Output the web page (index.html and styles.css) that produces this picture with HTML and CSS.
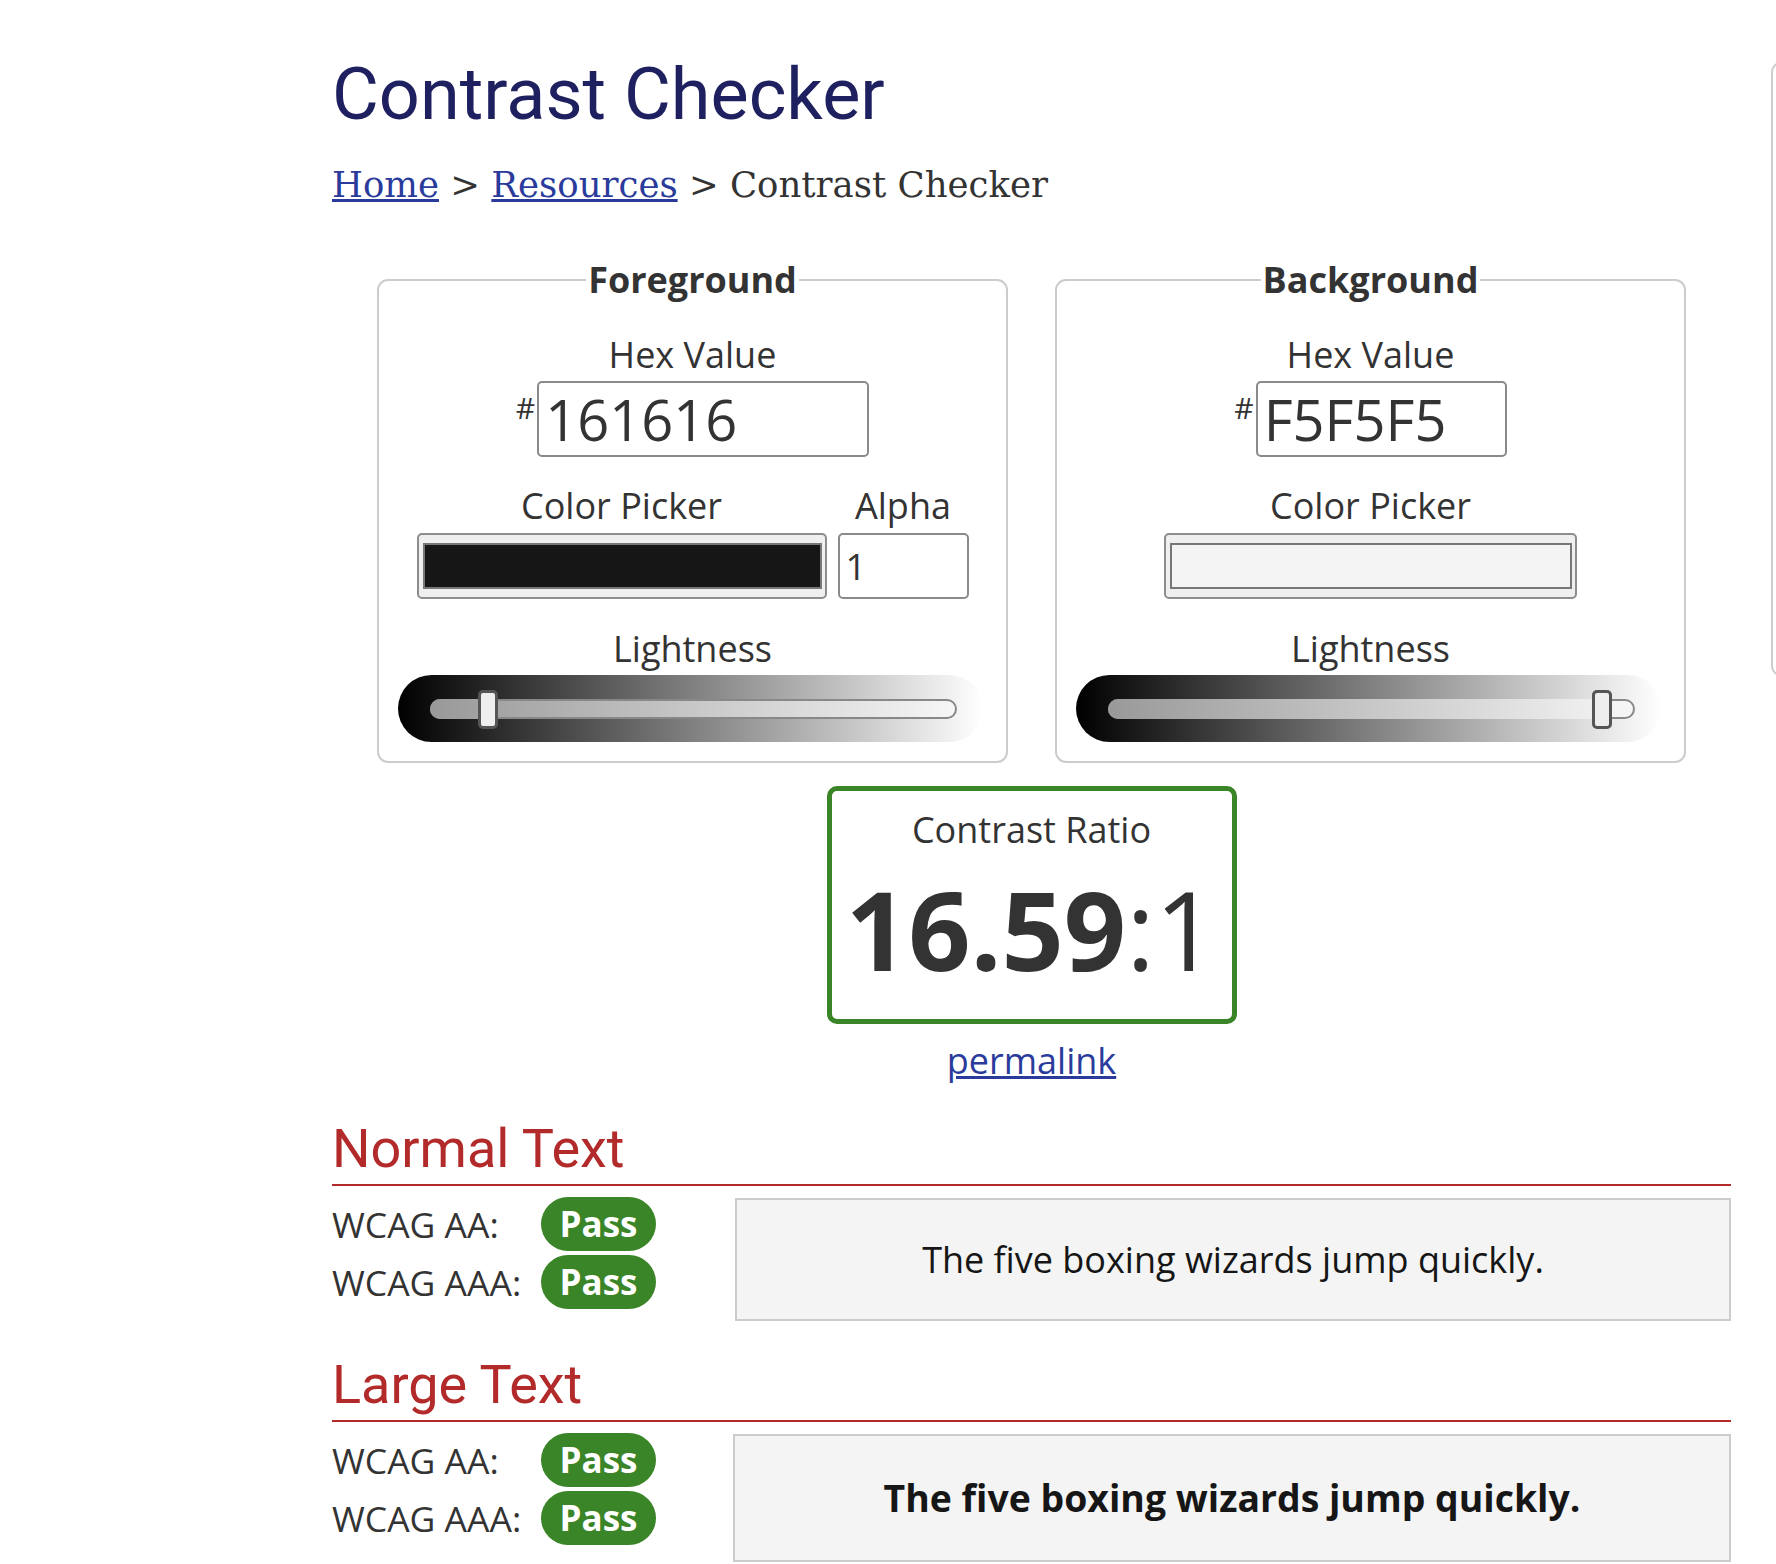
FILE: index.html
```html
<!DOCTYPE html>
<html lang="en">
<head>
<meta charset="utf-8">
<title>Contrast Checker</title>
<link rel="stylesheet" href="styles.css">
</head>
<body>
<div class="page">
  <main class="main">
    <h1 class="title">Contrast Checker</h1>
    <nav class="crumbs"><a href="#">Home</a> &gt; <a href="#">Resources</a> &gt; Contrast Checker</nav>

    <div class="pickers">
      <fieldset class="panel">
        <legend>Foreground</legend>
        <div class="panel-body">
          <div class="lbl lbl-hex">Hex Value</div>
          <div class="hexrow"><span class="hash">#</span><input class="hex hex-fg" type="text" value="161616"></div>
          <div class="pickgrid pickgrid-fg">
            <div class="lbl">Color Picker</div>
            <div class="lbl">Alpha</div>
            <div class="picker"><div class="swatch swatch-dark"></div></div>
            <input class="alpha" type="text" value="1">
          </div>
          <div class="lbl lbl-light">Lightness</div>
          <div class="slider">
            <div class="track">
              <div class="fill" style="width:58px"></div>
              <div class="thumb" style="left:46px"></div>
            </div>
          </div>
        </div>
      </fieldset>

      <fieldset class="panel">
        <legend>Background</legend>
        <div class="panel-body">
          <div class="lbl lbl-hex">Hex Value</div>
          <div class="hexrow"><span class="hash">#</span><input class="hex hex-bg" type="text" value="F5F5F5"></div>
          <div class="pickgrid pickgrid-bg">
            <div class="lbl">Color Picker</div>
            <div class="picker"><div class="swatch swatch-light"></div></div>
          </div>
          <div class="lbl lbl-light">Lightness</div>
          <div class="slider">
            <div class="track">
              <div class="fill" style="width:492px"></div>
              <div class="thumb" style="left:482px"></div>
            </div>
          </div>
        </div>
      </fieldset>
    </div>

    <div class="ratio-box">
      <div class="ratio-label">Contrast Ratio</div>
      <div class="ratio-value">16.59<span class="ratio-rest">:1</span></div>
    </div>
    <div class="permalink"><a href="#">permalink</a></div>

    <h2 class="sec-title">Normal Text</h2>
    <div class="results">
      <div class="checks">
        <div class="check"><span class="check-label">WCAG AA:</span><span class="badge">Pass</span></div>
        <div class="check"><span class="check-label">WCAG AAA:</span><span class="badge">Pass</span></div>
      </div>
      <div class="sample">The five boxing wizards jump quickly.</div>
    </div>

    <h2 class="sec-title">Large Text</h2>
    <div class="results results-large">
      <div class="checks">
        <div class="check"><span class="check-label">WCAG AA:</span><span class="badge">Pass</span></div>
        <div class="check"><span class="check-label">WCAG AAA:</span><span class="badge">Pass</span></div>
      </div>
      <div class="sample sample-large">The five boxing wizards jump quickly.</div>
    </div>
  </main>
  <aside class="aside"></aside>
</div>
</body>
</html>
```

FILE: styles.css
```css
html, body {
  margin: 0;
  padding: 0;
  overflow: hidden;
  background: #fff;
}

body {
  font-family: "Open Sans", sans-serif;
  color: #333;
  width: 1776px;
  height: 1564px;
}

.page {
  display: flex;
  align-items: flex-start;
  gap: 40px;
  padding-left: 332px;
}

.main {
  width: 1399px;
  flex-shrink: 0;
  padding-top: 51px;
}

.title {
  margin: 0;
  font-family: Roboto, sans-serif;
  font-weight: 400;
  font-size: 72px;
  line-height: 88px;
  color: #1e2060;
}

.crumbs {
  margin-top: 26px;
  font-family: "DejaVu Serif", serif;
  font-size: 35.5px;
  line-height: 40px;
  color: #333;
}

.crumbs a {
  color: #2a3b9c;
  text-decoration: underline;
}

.pickers {
  display: flex;
  justify-content: center;
  gap: 47px;
  margin-top: 51px;
}

.panel {
  width: 631px;
  min-width: 0;
  box-sizing: border-box;
  margin: 0;
  border: 2px solid #ccc;
  border-radius: 11px;
  padding: 0 19px 19px;
}

.panel legend {
  margin: 0 auto;
  padding: 0 2px;
  font-weight: 700;
  font-size: 36px;
  line-height: 48px;
  color: #333;
}

.panel-body {
  display: flex;
  flex-direction: column;
  align-items: center;
}

.lbl {
  font-size: 36px;
  line-height: 48px;
  text-align: center;
}

.lbl-hex {
  margin-top: 27px;
}

.hexrow {
  display: flex;
  align-items: flex-start;
  margin-top: 2px;
}

.hash {
  font-size: 30px;
  line-height: 41px;
  margin-top: 6px;
  margin-right: 2px;
}

.hex {
  height: 76px;
  box-sizing: border-box;
  border: 2px solid #8a8a8a;
  border-radius: 5px;
  padding: 0 0 0 6px;
  margin: 0;
  font-family: "Open Sans", sans-serif;
  font-size: 56px;
  color: #333;
  background: #fff;
  outline: none;
}

.hex-fg { width: 332px; }
.hex-bg { width: 251px; }

.pickgrid {
  display: grid;
  column-gap: 11px;
  row-gap: 3px;
  margin-top: 25px;
}

.pickgrid-fg { grid-template-columns: 410px 131px; }
.pickgrid-bg { grid-template-columns: 413px; }

.picker {
  height: 66px;
  box-sizing: border-box;
  border: 2px solid #8d8d8d;
  border-radius: 5px;
  background: #efefef;
  padding: 8px 3px 8px 4px;
}

.swatch {
  height: 100%;
  box-sizing: border-box;
  border: 2px solid #777;
}

.swatch-dark { background: #161616; }
.swatch-light { background: #f4f4f4; }

.alpha {
  width: 131px;
  height: 66px;
  box-sizing: border-box;
  border: 2px solid #8a8a8a;
  border-radius: 5px;
  padding: 0 0 0 6px;
  margin: 0;
  font-family: "Open Sans", sans-serif;
  font-size: 36px;
  color: #333;
  background: #fff;
  outline: none;
}

.lbl-light {
  margin-top: 26px;
}

.slider {
  align-self: flex-start;
  width: 585px;
  height: 67px;
  box-sizing: border-box;
  margin-top: 2px;
  padding: 24px 26px 0 32px;
  border-radius: 34px;
  background: linear-gradient(to right, #000 0%, #fff 100%);
}

.track {
  position: relative;
  height: 20px;
  box-sizing: border-box;
  border: 2px solid #888;
  border-radius: 10px;
  background: linear-gradient(to right, #999, #f6f6f6);
}

.fill {
  position: absolute;
  left: -2px;
  top: -2px;
  bottom: -2px;
  border-radius: 10px 0 0 10px;
  background: linear-gradient(to right, #999, #f6f6f6);
  background-size: 527px 100%;
}

.thumb {
  position: absolute;
  top: 50%;
  width: 20px;
  height: 39px;
  margin-top: -19.5px;
  box-sizing: border-box;
  border: 3px solid #555;
  border-radius: 5px;
  background: #eee;
}

.ratio-box {
  width: 410px;
  box-sizing: border-box;
  margin: 23px auto 0;
  border: 5px solid #3a8527;
  border-radius: 10px;
  padding: 15px 0 30px;
  text-align: center;
}

.ratio-label {
  font-size: 36px;
  line-height: 48px;
}

.ratio-value {
  margin-top: 15px;
  font-size: 109px;
  line-height: 120px;
  font-weight: 700;
  color: #333;
}

.ratio-rest {
  font-weight: 400;
}

.permalink {
  margin-top: 13px;
  text-align: center;
  font-size: 36px;
  line-height: 48px;
}

.permalink a {
  color: #2a3b9c;
  text-decoration: underline;
}

.sec-title {
  margin: 31px 0 0;
  padding-bottom: 2px;
  border-bottom: 2px solid #b22a2a;
  font-family: Roboto, sans-serif;
  font-weight: 400;
  font-size: 54px;
  line-height: 66px;
  color: #b22a2a;
}

.results {
  display: grid;
  grid-template-columns: 324px 1fr;
  column-gap: 79px;
  align-items: start;
  margin-top: 11px;
}

.results-large {
  column-gap: 77px;
}

.checks {
  display: flex;
  flex-direction: column;
  gap: 4px;
}

.check {
  display: flex;
  align-items: center;
  height: 54px;
}

.check-label {
  width: 209px;
  font-size: 35.5px;
  line-height: 48px;
}

.badge {
  width: 115px;
  height: 54px;
  border-radius: 27px;
  background: #3a8527;
  color: #fff;
  font-weight: 700;
  font-size: 35px;
  line-height: 54px;
  text-align: center;
}

.sample {
  height: 123px;
  box-sizing: border-box;
  margin-top: 1px;
  border: 2px solid #ccc;
  background: #f4f4f4;
  display: flex;
  align-items: center;
  justify-content: center;
  font-size: 36px;
  line-height: 48px;
  color: #161616;
}

.sample-large {
  height: 128px;
  font-size: 37.4px;
  font-weight: 700;
}

.aside {
  flex-shrink: 0;
  width: 300px;
  height: 614px;
  margin-top: 62px;
  box-sizing: border-box;
  border: 2px solid #ccc;
  border-radius: 10px;
}
```
